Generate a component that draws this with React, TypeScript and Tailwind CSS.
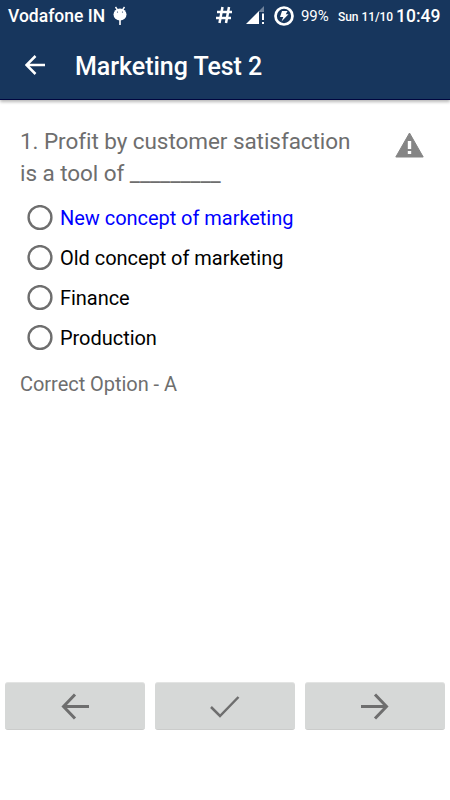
const options = [
  { label: "New concept of marketing", correct: true },
  { label: "Old concept of marketing", correct: false },
  { label: "Finance", correct: false },
  { label: "Production", correct: false },
];

const navButtons = [
  { name: "Previous", path: "M29 14.5H3.5M15 2.5L3.5 14.5L15 26.5", stroke: 3 },
  { name: "Check", path: "M1 15L10 24L28.5 5", stroke: 2.5 },
  { name: "Next", path: "M1 14.5H26.5M15 2.5L26.5 14.5L15 26.5", stroke: 3 },
];

function StatusBar() {
  return (
    <div className="flex h-8 items-center justify-between pl-2 pr-[10px] text-white">
      <div className="flex items-center">
        <span className="w-[97px] whitespace-nowrap text-[17.5px] font-medium leading-8">Vodafone IN</span>
        {/* Android head on a stick */}
        <svg width="14" height="20" viewBox="0 0 14 20" className="ml-2 mt-[-1px] fill-white">
          <path d="M2.5 1L4.5 4M11.5 1L9.5 4" stroke="white" strokeWidth="1.4" />
          <ellipse cx="7" cy="8.5" rx="6.5" ry="6" />
          <rect x="6.2" y="14" width="1.6" height="5" />
          <circle cx="4.5" cy="6" r="0.6" className="fill-[#17365d]" />
          <circle cx="9.5" cy="6" r="0.6" className="fill-[#17365d]" />
        </svg>
      </div>
      <div className="flex items-center">
        <svg width="18" height="18" viewBox="0 0 18 18" className="mr-[13px] mt-[-2px] fill-none stroke-white stroke-[2.5]">
          <path d="M7.5 1L4.5 17M14 1L11 17M2 6H17M1 12H16" />
        </svg>
        <svg width="19" height="19" viewBox="0 0 19 19" className="mr-[9px] mt-[-1px]">
          <path d="M18 0V6H13V5Z" fill="#6f829b" />
          <path d="M0 18L13 5V18Z" fill="white" />
          <path d="M16 7.5H18V14H16ZM16 16H18V18H16Z" fill="white" />
        </svg>
        <svg width="20" height="20" viewBox="0 0 20 20" className="mr-[7px] mt-[-1px]">
          <circle cx="10" cy="10" r="8.5" fill="none" stroke="white" strokeWidth="2.7" />
          <path d="M8 5H13.5L11.8 8.2H14.5L7.5 15.5L9.3 11H6Z" fill="white" />
        </svg>
        <span className="w-[37px] whitespace-nowrap text-[15px] leading-8 tracking-[-0.1px]">99%</span>
        <span className="mt-[2px] w-[58px] whitespace-nowrap text-[12px] font-medium leading-8 tracking-[-0.05px]">
          Sun 11/10
        </span>
        <span className="w-[44px] whitespace-nowrap text-[17.5px] font-medium leading-8">10:49</span>
      </div>
    </div>
  );
}

function Header() {
  return (
    <header className="h-[100px] border-b border-[#00063f] bg-[#17365d] shadow-[0_2px_3px_rgba(0,0,0,0.28)]">
      <StatusBar />
      <div className="flex h-[67px] items-center pl-[25px] text-white">
        <svg width="20" height="20" viewBox="0 0 20 20" className="-mt-px fill-none stroke-white stroke-[2.5]">
          <path d="M20 10H2M10.5 1L1.5 10L10.5 19" />
        </svg>
        <h1 className="ml-[30px] mt-[2px] whitespace-nowrap text-[25px] font-medium leading-8 tracking-[-0.04px]">
          Marketing Test 2
        </h1>
      </div>
    </header>
  );
}

export default function App() {
  return (
    <div className="flex h-[800px] w-[450px] flex-col bg-white font-[Roboto,sans-serif]">
      <Header />
      <main className="flex-1 pt-[25px]">
        <div className="flex justify-between pl-5 pr-[26px]">
          <p className="whitespace-nowrap text-[22.5px] leading-8 tracking-[-0.06px] text-[#6e6e6e]">
            1. Profit by customer satisfaction
            <br />
            is a tool of _________
          </p>
          <svg width="29" height="26" viewBox="0 0 29 26" className="mt-[7px]">
            <path d="M14.5 1L28.2 25H0.8Z" fill="#858585" stroke="#858585" strokeLinejoin="round" />
            <path d="M12.8 9H16.2V17H12.8ZM12.8 19H16.2V22H12.8Z" fill="white" />
          </svg>
        </div>
        <div className="mt-[9px]">
          {options.map((option) => (
            <label key={option.label} className="flex h-10 items-center pl-[27px]">
              <svg width="26" height="26" viewBox="0 0 26 26" className="-mt-px">
                <circle cx="13" cy="12.5" r="11.4" fill="none" stroke="#6e6e6e" strokeWidth="2.4" />
              </svg>
              <span
                className={`ml-[7px] whitespace-nowrap text-[20px] tracking-[-0.04px] ${option.correct ? "text-[#0000ff]" : "text-black"}`}
              >
                {option.label}
              </span>
            </label>
          ))}
        </div>
        <p className="mt-[10px] pl-5 text-[20px] leading-8 tracking-[-0.04px] text-[#6e6e6e]">Correct Option - A</p>
      </main>
      <div className="mb-[70px] flex gap-[10px] px-[5px]">
        {navButtons.map((button) => (
          <button
            key={button.name}
            aria-label={button.name}
            className="flex h-[48px] flex-1 items-center justify-center rounded-[3px] border-y border-t-[#e3e4e3] border-b-[#cbcccb] bg-[#d6d8d7]"
          >
            <svg width="30" height="28" viewBox="0 0 30 28" fill="none" stroke="#6e6e6e" strokeWidth={button.stroke}>
              <path d={button.path} />
            </svg>
          </button>
        ))}
      </div>
    </div>
  );
}
